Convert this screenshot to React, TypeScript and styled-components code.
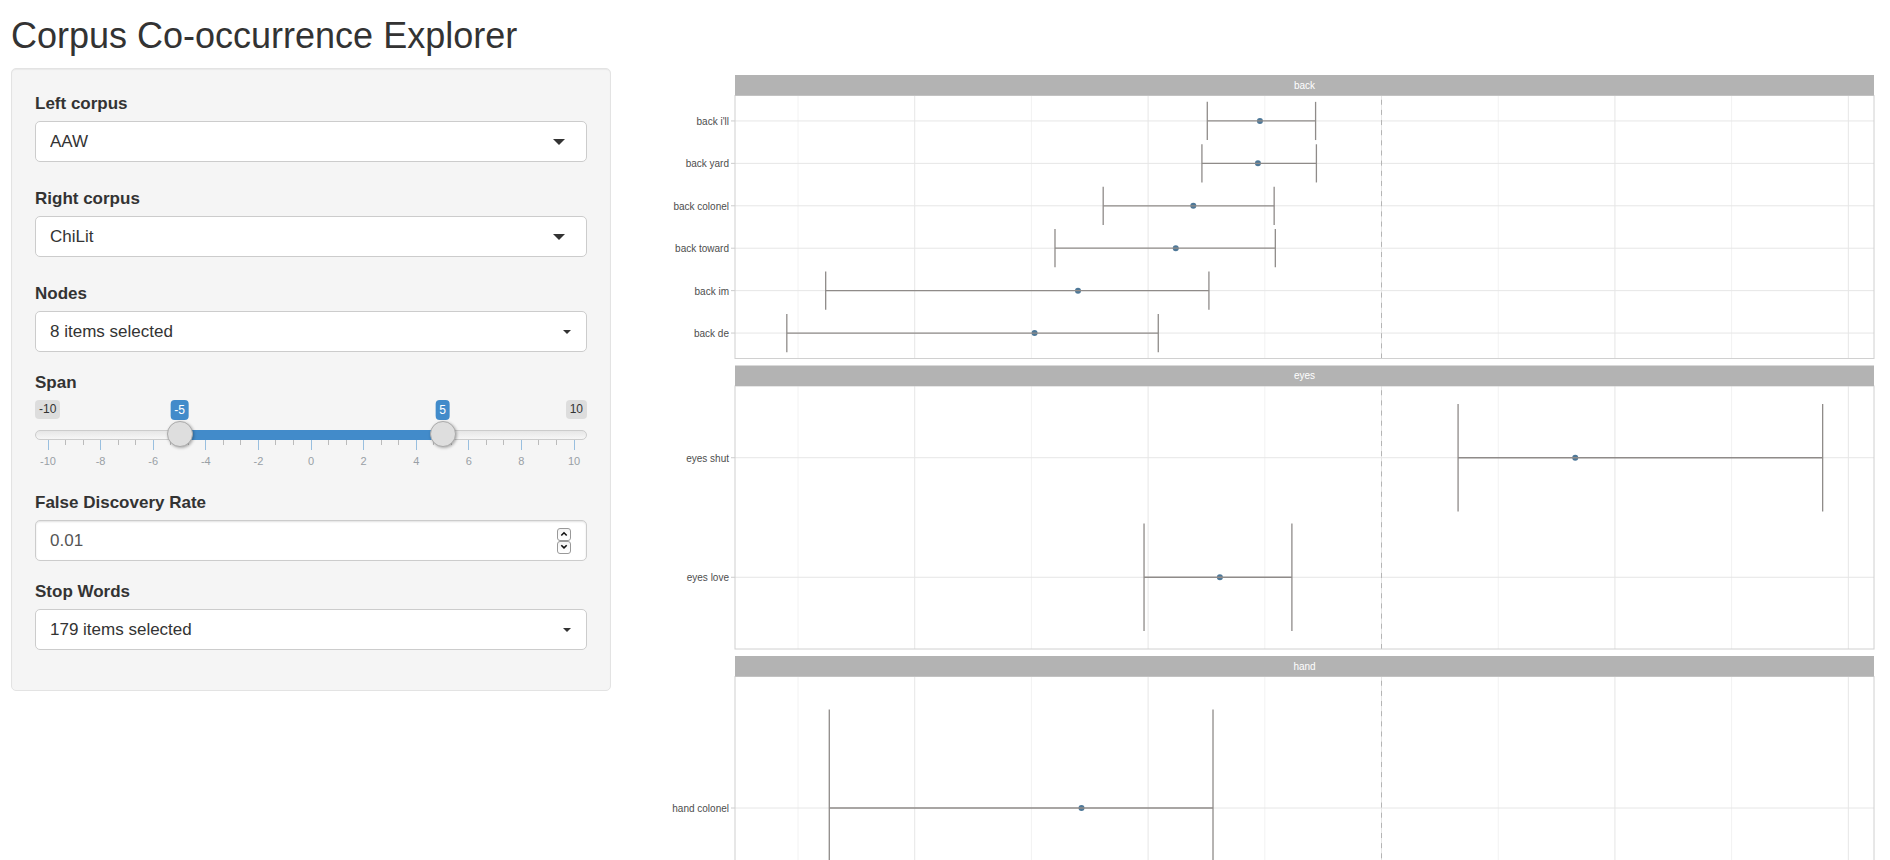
import React, { useState } from "react";
import styled, { createGlobalStyle, css } from "styled-components";

const GlobalStyle = createGlobalStyle`
  * { box-sizing: border-box; }
  body {
    margin: 0;
    background: #fff;
    color: #333;
    font-family: "Liberation Sans", Arial, sans-serif;
    font-size: 17px;
    line-height: 24px;
  }
`;

/* ---------- page ---------- */

const Page = styled.div`
  height: 100vh;
  padding: 16px 11px 0;
  overflow-y: auto;
  scrollbar-width: none;
`;

const Title = styled.h2`
  margin: 0 0 12px;
  font-size: 36px;
  line-height: 40px;
  font-weight: 400;
`;

const Columns = styled.div`
  display: grid;
  grid-template-columns: minmax(0, 600fr) minmax(0, 1238fr);
  column-gap: 30px;
  align-items: start;
`;

const Sidebar = styled.form`
  padding: 23px 23px 21px;
  background: #f5f5f5;
  border: 1px solid #e3e3e3;
  border-radius: 5px;
  box-shadow: inset 0 1px 1px rgba(0, 0, 0, 0.05);
`;

const Group = styled.div<{ $roomy?: boolean }>`
  margin-bottom: ${(p) => (p.$roomy ? 25 : 19)}px;
`;

const Label = styled.label`
  display: block;
  margin-bottom: 5px;
  font-weight: 700;
`;

/* ---------- boxed controls ---------- */

const box = css`
  width: 100%;
  height: 41px;
  background: #fff;
  border: 1px solid #ccc;
  border-radius: 5px;
`;

const controlText = css`
  color: #333;
  font: inherit;
`;

const SelectBox = styled.div`
  display: grid;
  align-items: center;
`;

const Select = styled.select`
  ${box}
  ${controlText}
  grid-area: 1 / 1;
  padding: 0 14px;
  appearance: none;
`;

const PickerButton = styled.button`
  ${box}
  ${controlText}
  display: flex;
  align-items: center;
  justify-content: space-between;
  padding: 0 15px 0 14px;
  text-align: left;
`;

const Caret = styled.span<{ $large?: boolean }>`
  border-style: solid;
  border-color: #333 transparent transparent;
  border-width: ${(p) => (p.$large ? "6px 6px 0" : "4px 4px 0")};
  pointer-events: none;
`;

const SelectCaret = styled(Caret)`
  grid-area: 1 / 1;
  justify-self: end;
  margin-right: 22px;
`;

const NumberBox = styled.div`
  ${box}
  display: flex;
  align-items: center;
  padding: 0 15px 0 14px;
  box-shadow: inset 0 1px 2px rgba(0, 0, 0, 0.12);
`;

const NumberInput = styled.input`
  flex: 1;
  min-width: 0;
  padding: 0;
  border: 0;
  outline: 0;
  background: transparent;
  color: #555;
  font: inherit;
  appearance: textfield;
  &::-webkit-inner-spin-button { appearance: none; }
`;

const Spinner = styled.div`
  display: flex;
  flex-direction: column;
`;

const StepButton = styled.button`
  display: flex;
  align-items: center;
  justify-content: center;
  width: 14px;
  height: 13px;
  padding: 0;
  border: 1px solid #999;
  border-radius: 3px;
  background: linear-gradient(#f4f4f4, #fff);
`;

/* ---------- range slider ---------- */

const Slider = styled.div`
  position: relative;
`;

const EndTags = styled.div`
  display: flex;
  justify-content: space-between;
  height: 21px;
`;

const Tag = styled.span`
  height: 19px;
  padding: 0 4px;
  border-radius: 4px;
  background: #ddd;
  font-size: 12px;
  line-height: 19px;
`;

const ValueTag = styled(Tag)`
  position: absolute;
  top: 0;
  height: 20px;
  line-height: 21px;
  background: #428bca;
  color: #fff;
  transform: translateX(-50%);
`;

const RailStack = styled.div`
  display: grid;
  align-items: center;
  height: 26px;
`;

const Rail = styled.div`
  grid-area: 1 / 1;
  height: 10px;
  margin-top: 2px;
  border: 1px solid #ccc;
  border-radius: 10px;
  background: linear-gradient(#dedede -50%, #fff 150%);
`;

const RailSpan = styled.div`
  grid-area: 1 / 1;
  height: 10px;
  margin: 2px 13px 0;
`;

const RailFill = styled.div`
  height: 10px;
  background: #428bca;
`;

const RangeInput = styled.input`
  grid-area: 1 / 1;
  z-index: 1;
  width: 100%;
  height: 26px;
  margin: 0;
  background: transparent;
  appearance: none;
  pointer-events: none;
  &::-webkit-slider-runnable-track { height: 26px; background: transparent; }
  &::-webkit-slider-thumb {
    appearance: none;
    width: 26px;
    height: 26px;
    border: 1px solid #ababab;
    border-radius: 50%;
    background: #dedede;
    box-shadow: 1px 1px 3px rgba(0, 0, 0, 0.3);
    pointer-events: auto;
  }
`;

const ScaleBox = styled.div`
  height: 32px;
  margin: -7px 13px 0;
`;

const ScaleSvg = styled.svg`
  display: block;
  width: 100%;
  height: 32px;
  overflow: visible;
  font-size: 11px;
`;

/* ---------- chart ---------- */

const ChartArea = styled.div`
  padding: 7px 5px 20px 94px;
`;

const ChartSvg = styled.svg`
  display: block;
  width: 100%;
  overflow: visible;
  font-size: 10px;
`;

const LOW = -10;
const HIGH = 10;
const fraction = (v: number) => (v - LOW) / (HIGH - LOW);

const Scale = () => {
  const ticks = Array.from({ length: 31 }, (_, i) => i);
  return (
    <ScaleBox>
      <ScaleSvg aria-hidden="true">
        {ticks.map((i) => {
          const x = `${(i / 30) * 100}%`;
          const major = i % 3 === 0;
          return (
            <g key={i}>
              <line
                x1={x}
                x2={x}
                y1={0}
                y2={major ? 10 : 5}
                stroke={major ? "#99bfdf" : "#bbb"}
                strokeWidth={1}
                shapeRendering="crispEdges"
              />
              {major && (
                <text x={x} y={25} textAnchor="middle" fill="#999fa5">
                  {LOW + (i / 3) * 2}
                </text>
              )}
            </g>
          );
        })}
      </ScaleSvg>
    </ScaleBox>
  );
};

const SpanSlider = () => {
  const [from, setFrom] = useState(-5);
  const [to, setTo] = useState(5);
  const tagLeft = (v: number) => `calc(13px + (100% - 26px) * ${fraction(v)})`;
  return (
    <Slider>
      <EndTags>
        <Tag>{LOW}</Tag>
        <Tag>{HIGH}</Tag>
      </EndTags>
      <ValueTag style={{ left: tagLeft(from) }}>{from}</ValueTag>
      <ValueTag style={{ left: tagLeft(to) }}>{to}</ValueTag>
      <RailStack>
        <Rail />
        <RailSpan>
          <RailFill
            style={{
              marginLeft: `${fraction(from) * 100}%`,
              width: `${(fraction(to) - fraction(from)) * 100}%`,
            }}
          />
        </RailSpan>
        <RangeInput
          id="span-from"
          type="range"
          min={LOW}
          max={HIGH}
          value={from}
          onChange={(e) => setFrom(Math.min(Number(e.target.value), to))}
        />
        <RangeInput
          type="range"
          aria-label="Span end"
          min={LOW}
          max={HIGH}
          value={to}
          onChange={(e) => setTo(Math.max(Number(e.target.value), from))}
        />
      </RailStack>
      <Scale />
    </Slider>
  );
};

type Row = { label: string; low: number; mid: number; high: number };
type Facet = { node: string; rows: Row[] };

const facets: Facet[] = [
  {
    node: "back",
    rows: [
      { label: "back i'll", low: -1.493, mid: -1.042, high: -0.565 },
      { label: "back yard", low: -1.539, mid: -1.059, high: -0.558 },
      { label: "back colonel", low: -2.385, mid: -1.613, high: -0.92 },
      { label: "back toward", low: -2.798, mid: -1.763, high: -0.91 },
      { label: "back im", low: -4.763, mid: -2.601, high: -1.479 },
      { label: "back de", low: -5.096, mid: -2.973, high: -1.913 },
    ],
  },
  {
    node: "eyes",
    rows: [
      { label: "eyes shut", low: 0.656, mid: 1.66, high: 3.78 },
      { label: "eyes love", low: -2.035, mid: -1.385, high: -0.768 },
    ],
  },
  {
    node: "hand",
    rows: [{ label: "hand colonel", low: -4.732, mid: -2.571, high: -1.444 }],
  },
];

const X_MIN = -5.54;
const X_MAX = 4.22;
const FACET_PITCH = 290.5;
const STRIP = 20.5;
const PLOT = 263;
const gridValues = [-5, -4, -3, -2, -1, 0, 1, 2, 3, 4];
const xPos = (v: number) => `${((v - X_MIN) / (X_MAX - X_MIN)) * 100}%`;

const FacetPlot = ({ facet, top }: { facet: Facet; top: number }) => {
  const plotTop = top + STRIP;
  const plotBottom = plotTop + PLOT;
  const step = PLOT / (facet.rows.length + 0.2);
  const rowY = (i: number) => plotTop + step * (0.6 + i);
  return (
    <g>
      {gridValues.map((v) => (
        <line
          key={v}
          x1={xPos(v)}
          x2={xPos(v)}
          y1={plotTop}
          y2={plotBottom}
          stroke={v % 2 === 0 ? "#e6e6e6" : "#f2f2f2"}
        />
      ))}
      {facet.rows.map((r, i) => (
        <line key={r.label} x1={0} x2="100%" y1={rowY(i)} y2={rowY(i)} stroke="#e6e6e6" />
      ))}
      <line
        x1={xPos(0)}
        x2={xPos(0)}
        y1={plotBottom}
        y2={plotTop}
        stroke="#b3b3b3"
        strokeDasharray="5 5.15"
      />
      {facet.rows.map((r, i) => {
        const y = rowY(i);
        const half = step * 0.45;
        return (
          <g key={r.label}>
            <circle cx={xPos(r.mid)} cy={y} r={3} fill="#4e7898" />
            <g stroke="#8f8b89" strokeWidth={1.3}>
              <line x1={xPos(r.low)} x2={xPos(r.high)} y1={y} y2={y} />
              <line x1={xPos(r.low)} x2={xPos(r.low)} y1={y - half} y2={y + half} />
              <line x1={xPos(r.high)} x2={xPos(r.high)} y1={y - half} y2={y + half} />
            </g>
            <line x1={-4} x2={0} y1={y} y2={y} stroke="#ccc" />
            <text x={-6} y={y + 4} textAnchor="end" fill="#4d4d4d">
              {r.label}
            </text>
          </g>
        );
      })}
      <rect x={0} y={plotTop} width="100%" height={PLOT} fill="none" stroke="#d0d0d0" />
      <rect x={0} y={top} width="100%" height={STRIP} fill="#b3b3b3" />
      <text x="50%" y={Math.floor(top) + 14} textAnchor="middle" fill="#fff">
        {facet.node}
      </text>
    </g>
  );
};

const Step = ({ up, onClick }: { up?: boolean; onClick: () => void }) => (
  <StepButton type="button" aria-label={up ? "Increase" : "Decrease"} onClick={onClick}>
    <svg width="8" height="6" viewBox="0 0 8 6" fill="none" stroke="#111" strokeWidth="1.6">
      <path d={up ? "M1.3 4.5 L4 1.8 L6.7 4.5" : "M1.3 1.2 L4 3.9 L6.7 1.2"} />
    </svg>
  </StepButton>
);

export default function App() {
  const [rate, setRate] = useState("0.01");
  const nudge = (d: number) => setRate(String(Math.max(0, Math.round((Number(rate) + d) * 100) / 100)));
  return (
    <>
      <GlobalStyle />
      <Page>
        <Title>Corpus Co-occurrence Explorer</Title>
        <Columns>
          <Sidebar>
            <Group $roomy>
              <Label htmlFor="left">Left corpus</Label>
              <SelectBox>
                <Select id="left" defaultValue="AAW">
                  <option>AAW</option>
                  <option>ChiLit</option>
                </Select>
                <SelectCaret $large />
              </SelectBox>
            </Group>
            <Group $roomy>
              <Label htmlFor="right">Right corpus</Label>
              <SelectBox>
                <Select id="right" defaultValue="ChiLit">
                  <option>AAW</option>
                  <option>ChiLit</option>
                </Select>
                <SelectCaret $large />
              </SelectBox>
            </Group>
            <Group>
              <Label htmlFor="nodes">Nodes</Label>
              <PickerButton id="nodes" type="button" aria-haspopup="listbox">
                8 items selected
                <Caret />
              </PickerButton>
            </Group>
            <Group>
              <Label htmlFor="span-from">Span</Label>
              <SpanSlider />
            </Group>
            <Group>
              <Label htmlFor="rate">False Discovery Rate</Label>
              <NumberBox>
                <NumberInput
                  id="rate"
                  type="number"
                  step="0.01"
                  value={rate}
                  onChange={(e) => setRate(e.target.value)}
                />
                <Spinner>
                  <Step up onClick={() => nudge(0.01)} />
                  <Step onClick={() => nudge(-0.01)} />
                </Spinner>
              </NumberBox>
            </Group>
            <Group>
              <Label htmlFor="stop">Stop Words</Label>
              <PickerButton id="stop" type="button" aria-haspopup="listbox">
                179 items selected
                <Caret />
              </PickerButton>
            </Group>
          </Sidebar>
          <ChartArea>
            <ChartSvg height={facets.length * FACET_PITCH} role="img" aria-label="Co-occurrence effect sizes">
              {facets.map((f, i) => (
                <FacetPlot key={f.node} facet={f} top={i * FACET_PITCH} />
              ))}
            </ChartSvg>
          </ChartArea>
        </Columns>
      </Page>
    </>
  );
}
